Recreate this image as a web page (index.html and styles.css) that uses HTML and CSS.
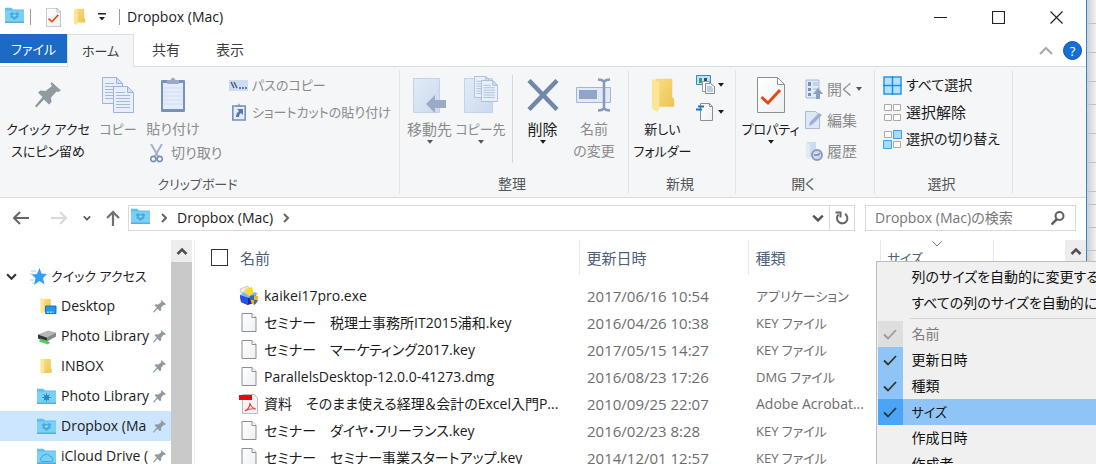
FILE: index.html
```html
<!DOCTYPE html>
<html lang="ja">
<head>
<meta charset="utf-8">
<title>Dropbox (Mac)</title>
<link rel="stylesheet" href="styles.css">
</head>
<body>
<svg class="defs" aria-hidden="true">
  <defs>
    <linearGradient id="gPaper" x1="0" y1="0" x2="1" y2="1"><stop offset="0" stop-color="#fff"/><stop offset="1" stop-color="#edf0f2"/></linearGradient>
    <linearGradient id="gFolder" x1="0" y1="0" x2="1" y2="1"><stop offset="0" stop-color="#f8dc86"/><stop offset="1" stop-color="#eec44f"/></linearGradient>
    <linearGradient id="gFade" x1="0" y1="0" x2="1" y2="1"><stop offset="0" stop-color="#e3ebf7"/><stop offset="1" stop-color="#cbd9ee"/></linearGradient>
  </defs>
  <symbol id="bluefolder" viewBox="0 0 20 16"><path d="M0 0h6l2 2h11v13H0z" fill="#5fc0ec"/><path d="M0 3h19v12H0z" fill="#7ad0f8"/><path d="M0 14h19v1.500H0z" fill="#58aed8"/></symbol>
  <symbol id="dropfolder" viewBox="0 0 20 16"><use href="#bluefolder"/><path d="M7 4.500l2.500 1.500 2.500-1.500 2.500 1.800-1.500 1.700 1 1.500-2 1-2.500 2-2.500-2-2-1 1-1.500-1.500-1.700z" fill="#49aadd"/><path d="M9.500 6.500l2.200 1.500-2.200 1.600-2.200-1.600z" fill="#8ad7fa"/></symbol>
  <symbol id="yfolder" viewBox="0 0 14 18"><path d="M3 0h9v10l1 1v4H3z" fill="url(#gFolder)"/><path d="M1 0l4 2v14l-1 2-3-2z" fill="#fde596"/></symbol>
  <symbol id="pin" viewBox="0 0 26 26"><path d="M16.500 0L26 8.500l-3 1.500-1.500-.5-5.500 6 .5 4.500-2.500 2.500-5-5L1.500 25.500 0 24l7.500-9L3 10.500 5.500 8.500l5 .5L17 4l-1.500-2z" fill="#8f9aa1"/></symbol>
  <symbol id="check" viewBox="0 0 14 11"><path d="M1 5.500l4 4L13 1" fill="none" stroke="currentColor" stroke-width="1.800"/></symbol>
  <symbol id="page" viewBox="0 0 15 19"><path d="M.5.5h10l4 4v14H.5z" fill="url(#gPaper)" stroke="#8c8f92"/><path d="M10.500.5v4h4" fill="#fff" stroke="#8c8f92"/></symbol>
  <symbol id="proppage" viewBox="0 0 28 36"><path d="M.5.5h20l7 7v28H.5z" fill="url(#gPaper)" stroke="#8c8f92"/><path d="M20.500.5v7h7z" fill="#fff" stroke="#8c8f92"/><path d="M4.500 20l6.500 6L23 13" fill="none" stroke="#e8470e" stroke-width="3"/></symbol>
  <symbol id="down" viewBox="0 0 6 4"><path d="M0 0h6L3 3.800z" fill="currentColor"/></symbol>
  <symbol id="chev" viewBox="0 0 10 6"><path d="M1 1l4 4 4-4" fill="none" stroke="currentColor" stroke-width="2"/></symbol>
  <symbol id="chevr" viewBox="0 0 6 10"><path d="M1 1l4 4-4 4" fill="none" stroke="currentColor" stroke-width="2"/></symbol>
  <symbol id="textpage" viewBox="0 0 21 27"><path d="M.5.5h14l6 6v20H.5z" fill="#e8effa" stroke="#9fb3d6"/><path d="M14.500.5v6h6z" fill="#d3dff2" stroke="#9fb3d6"/><path d="M3 6.500h9M3 9.500h14M3 12.500h14M3 15.500h14M3 18.500h14M3 21.500h14" stroke="#a4b8da"/></symbol>
  <symbol id="clip" viewBox="0 0 26 36"><rect x="1" y="3" width="24" height="32" rx="1" fill="#7890bd"/><path d="M3 6h20v26H3z" fill="#e4ecf9"/><path d="M3 11h20M3 15h20M3 19h20M3 23h20M3 27h20" stroke="#cfdbf0"/><path d="M7 7V3h3.500q2.500-5 5 0H19v4z" fill="#9aabc6"/></symbol>
</svg>

<div class="window">
  <header class="titlebar">
    <svg class="i20"><use href="#dropfolder"/></svg>
    <span class="tick"></span>
    <button class="quick" aria-label="プロパティ"><svg class="qprop"><use href="#proppage"/></svg></button>
    <button class="quick" aria-label="新しいフォルダー"><svg class="qfold"><use href="#yfolder"/></svg></button>
    <button class="quick narrow" aria-label="カスタマイズ"><svg width="8" height="8" viewBox="0 0 8 8"><path d="M0 0h8v1.500H0zM1 4h6L4 7.500z" fill="#222"/></svg></button>
    <span class="tick"></span>
    <h1 class="title">Dropbox (Mac)</h1>
    <div class="controls">
      <button aria-label="最小化"><svg width="13" height="13"><path d="M0 6.500h13" stroke="#222"/></svg></button>
      <button aria-label="最大化"><svg width="13" height="13"><path d="M.5.5h12v12H.5z" fill="none" stroke="#222" stroke-width="1.200"/></svg></button>
      <button aria-label="閉じる"><svg width="13" height="13"><path d="M.5.5l12 12m0-12l-12 12" stroke="#222" stroke-width="1.200"/></svg></button>
    </div>
  </header>

  <nav class="tabs">
    <button class="tab file">ファイル</button>
    <button class="tab active">ホーム</button>
    <button class="tab">共有</button>
    <button class="tab">表示</button>
    <span class="grow"></span>
    <button class="collapse" aria-label="リボンの最小化"><svg width="14" height="9" viewBox="0 0 14 9"><path d="M1 8l6-6 6 6" fill="none" stroke="#a8a8a8" stroke-width="2"/></svg></button>
    <button class="help" aria-label="ヘルプ">?</button>
  </nav>

  <div class="ribbon">
    <section class="group">
      <div class="tools">
        <button class="big pinbtn"><span class="ico"><svg width="26" height="26"><use href="#pin"/></svg></span>クイック アクセ<br>スにピン留め</button>
        <button class="big copybtn off"><span class="ico"><svg width="32" height="36"><use href="#textpage" width="21" height="27"/><use href="#textpage" x="11" y="9" width="21" height="27"/></svg></span>コピー</button>
        <div class="stack paste">
          <button class="big off"><span class="ico"><svg width="26" height="36"><use href="#clip"/></svg></span><span>貼り付け</span></button>
          <button class="small off cut"><svg width="13" height="19" viewBox="0 0 13 19"><path d="M1 0l7 12M12 0L5 12" stroke="#a3b1cb" stroke-width="2"/><circle cx="3.300" cy="15" r="2.600" fill="none" stroke="#7890b5" stroke-width="1.600"/><circle cx="9.700" cy="15" r="2.600" fill="none" stroke="#7890b5" stroke-width="1.600"/></svg>切り取り</button>
        </div>
        <div class="stack paths">
          <button class="small off"><svg width="19" height="11"><path d="M0 0h19v11H0z" fill="#cfdcf0"/><path d="M2 2l3 6m0-6l3 6" stroke="#4e6288" stroke-width="1.500"/><path d="M10 8h2m1 0h2m1 0h2" stroke="#4e6288" stroke-width="1.500"/></svg>パスのコピー</button>
          <button class="small off"><svg width="19" height="18"><g transform="translate(3 0)"><path d="M.8 3h12.400v14H.8z" fill="#e4ecf9" stroke="#7890bd" stroke-width="1.600"/><path d="M4 4V2h2q1-3 2 0h2v2z" fill="#8798ba"/><path d="M5 6h6v6L9 10q-2 1-2 4H4q0-4 3-6z" fill="#5a77aa"/></g></svg>ショートカットの貼り付け</button>
        </div>
      </div>
      <h2>クリップボード</h2>
    </section>

    <section class="group">
      <div class="tools organize">
        <button class="big off"><span class="ico"><svg width="34" height="38"><path d="M.5 2.500h26v34H.5z" fill="url(#gFade)" stroke="#c4d3ea"/><path d="M13 28l9-9v5h11v8H22v5z" fill="#9caac7"/></svg></span><span class="kanji">移動先</span><svg class="drop"><use href="#down"/></svg></button>
        <button class="big off"><span class="ico"><svg width="34" height="38"><path d="M.5 2.500h28v34H.5z" fill="url(#gFade)" stroke="#c4d3ea"/><use href="#textpage" x="10" y="0" width="17" height="22"/><use href="#textpage" x="17" y="4" width="17" height="22"/></svg></span>コピー先<svg class="drop"><use href="#down"/></svg></button>
        <span class="rule"></span>
        <button class="big"><span class="ico"><svg width="32" height="32"><path d="M2 1.500l28 29M30 1.500L2 30.500" stroke="#7187ab" stroke-width="4.500"/></svg></span><span class="kanji">削除</span><svg class="drop"><use href="#down"/></svg></button>
        <button class="big off"><span class="ico"><svg width="36" height="34"><path d="M.5 9.500h34v15H.5z" fill="#e1eaf8" stroke="#a3b5d4"/><path d="M3 12h18v9H3z" fill="#93a5c6"/><path d="M22 1.500q4 0 6 2 2-2 6-2M22 32.500q4 0 6-2 2 2 6 2M28 3v28" fill="none" stroke="#8799bb" stroke-width="2.500"/></svg></span><span class="rename">名前<br>の変更</span></button>
      </div>
      <h2>整理</h2>
    </section>

    <section class="group">
      <div class="tools create">
        <button class="big"><span class="ico"><svg width="26" height="35"><use href="#yfolder" width="26" height="35"/></svg></span>新しい<br>フォルダー</button>
        <div class="stack minis">
          <button class="mini" aria-label="新しいアイテム"><svg width="19" height="19"><path d="M.5.5h14v9H.5z" fill="#bde3fb" stroke="#3f87b8"/><path d="M3 3h3v5H3z" fill="#37a06c"/><path d="M8 3h3v3H8z" fill="#344f80"/><path d="M6.500 6.500h7v10h-7z" fill="#fff" stroke="#999"/><path d="M9.500 8.500h5l4 3v7h-9z" fill="#f2f6fa" stroke="#888"/><path d="M11 12h5M11 14h6M11 16h6" stroke="#7fa9d3"/></svg><svg class="drop"><use href="#down"/></svg></button>
          <button class="mini" aria-label="ショートカット"><svg width="19" height="19"><path d="M4.500 1.500h9l3 3v14h-12z" fill="url(#gPaper)" stroke="#8c8f92"/><path d="M13.500 1.500v3h3" fill="none" stroke="#8c8f92"/><path d="M2 4.500h6M0 7.500h6" stroke="#1874c7" stroke-width="2"/></svg><svg class="drop"><use href="#down"/></svg></button>
        </div>
      </div>
      <h2>新規</h2>
    </section>

    <section class="group">
      <div class="tools open">
        <button class="big"><span class="ico"><svg width="28" height="36"><use href="#proppage"/></svg></span>プロパティ<svg class="drop"><use href="#down"/></svg></button>
        <div class="stack verbs">
          <button class="small off"><svg width="18" height="20"><path d="M1 1h13v18H1z" fill="#dfe9f8" stroke="#a9bbd9"/><path d="M3 3h3v4H3zM3 9h3v3H3zM3 14h3v3H3z" fill="#788eb4"/><path d="M8 4h5M8 6h5M8 10h5" stroke="#a9bbd9"/><path d="M8 15l5-6 5 6h-3v5h-4v-5z" fill="#8c9fc2"/></svg>開く<svg class="drop"><use href="#down"/></svg></button>
          <button class="small off"><svg width="18" height="20"><path d="M.5 1.500h10l4 4v13H.5z" fill="#dde7f6" stroke="#a9bbd9"/><path d="M4 16l1-4 9-9 3 2-9 9z" fill="#9eb0cf"/></svg>編集</button>
          <button class="small off"><svg width="18" height="20"><path d="M1 1h10v15H1z" fill="#cfdcf0"/><path d="M1 1l4 2v16l-4-2z" fill="#e1eaf7"/><circle cx="12" cy="14" r="5" fill="#cfdbed" stroke="#8b9dbe" stroke-width="2"/><path d="M9 14h4l2-2" stroke="#7489ae" fill="none" stroke-width="1.500"/></svg>履歴</button>
        </div>
      </div>
      <h2>開く</h2>
    </section>

    <section class="group">
      <div class="tools select">
        <div class="stack picks">
          <button class="small"><svg width="19" height="19"><path d="M1 1h17v17H1z" fill="#b5dffb" stroke="#2997e4" stroke-width="1.500"/><path d="M9.500 0v19M0 9.500h19" stroke="#1d8fe1" stroke-width="1.500"/></svg>すべて選択</button>
          <button class="small"><svg width="19" height="19"><path d="M1.500 1.500h7v6h-7zM10.500 1.500h7v6h-7zM1.500 11.500h7v6h-7zM10.500 11.500h7v6h-7z" fill="#fafafa" stroke="#a9a9a9"/></svg><span class="kanji">選択解除</span></button>
          <button class="small"><svg width="19" height="19"><path d="M1.500 1.500h7v6h-7zM10.500 11.500h7v6h-7z" fill="#fafafa" stroke="#a9a9a9"/><path d="M10.500.5h8v8h-8zM.5 10.500h8v8h-8z" fill="#a9dafb" stroke="#3f9fe2"/></svg>選択の切り替え</button>
        </div>
      </div>
      <h2>選択</h2>
    </section>
  </div>

  <div class="address">
    <button class="nav back" aria-label="戻る"><svg width="17" height="14" viewBox="0 0 17 14"><path d="M17 7H2M8 1L2 7l6 6" fill="none" stroke="#666" stroke-width="2"/></svg></button>
    <button class="nav fwd" aria-label="進む"><svg width="17" height="14" viewBox="0 0 17 14"><path d="M0 7h15M9 1l6 6-6 6" fill="none" stroke="#d8d8d8" stroke-width="2"/></svg></button>
    <button class="nav hist" aria-label="最近表示した場所"><svg width="8" height="6"><use href="#chev"/></svg></button>
    <button class="nav up" aria-label="上へ"><svg width="16" height="16" viewBox="0 0 16 16"><path d="M8 16V2M2 8l6-6 6 6" fill="none" stroke="#707070" stroke-width="2.200"/></svg></button>
    <div class="crumbs">
      <svg class="i20"><use href="#dropfolder"/></svg>
      <svg class="sepr"><use href="#chevr"/></svg>
      <a href="#">Dropbox (Mac)</a>
      <svg class="sepr"><use href="#chevr"/></svg>
      <span class="grow"></span>
      <button aria-label="以前の場所"><svg width="12" height="8"><use href="#chev"/></svg></button>
      <button class="reload" aria-label="更新"><svg width="14" height="14" viewBox="0 0 14 14"><path d="M10 2.800A5.200 5.200 0 1 1 3.500 3.500" fill="none" stroke="#666" stroke-width="2"/><path d="M.5 1.500h5v5" fill="none" stroke="#666" stroke-width="2"/></svg></button>
    </div>
    <div class="search">
      <input type="text" aria-label="検索" placeholder="Dropbox (Mac)の検索">
      <button aria-label="検索する"><svg width="14" height="14" viewBox="0 0 14 14"><circle cx="8.500" cy="5" r="4" fill="none" stroke="#606060" stroke-width="2"/><path d="M6 8l-5.500 5.500" stroke="#606060" stroke-width="2.500"/></svg></button>
    </div>
  </div>

  <div class="main">
    <aside class="side">
      <div class="tree">
        <a href="#" class="root"><svg class="fold"><use href="#chev"/></svg><svg width="17" height="17" viewBox="0 0 17 17"><path d="M9.500 0l2 5.500 5.500.5-4 4 1.500 6.500-5-3.500-5.500 4 1.500-7-4-3.500 5.500-.5z" fill="#31a0f3"/><path d="M1 3h5M0 6h3M0 12h4M2 15h3" stroke="#8ed0fb"/></svg><span class="kana">クイック アクセス</span></a>
        <a href="#"><svg class="i20" viewBox="0 0 20 18"><path d="M6 1h8v14H6z" fill="url(#gFolder)"/><path d="M3 0l4 2v12l-1 3-3-2z" fill="#fde596"/><path d="M8.500 8.500h11v8h-11z" fill="#1e97ec" stroke="#0f6fb8"/><path d="M10 15h7" stroke="#fff" stroke-dasharray="2 1"/></svg><span>Desktop</span><svg class="pin"><use href="#pin"/></svg></a>
        <a href="#"><svg class="i20" viewBox="0 0 20 16"><path d="M1 6l10-4 8 2-8 5z" fill="#b5b7b8"/><path d="M1 6l9 3v4l-9-3z" fill="#303433"/><path d="M10 9l9-5v4l-9 5z" fill="#858988"/><path d="M3 10l7 2 3 2-2 2-9-3z" fill="#52cd60"/></svg><span>Photo Library</span><svg class="pin"><use href="#pin"/></svg></a>
        <a href="#"><svg class="i20" viewBox="0 0 20 18"><path d="M6 1h8v10l1 1v4H6z" fill="url(#gFolder)"/><path d="M3 0l4 2v12l-1 3-3-2z" fill="#fde596"/></svg><span>INBOX</span><svg class="pin"><use href="#pin"/></svg></a>
        <a href="#"><svg class="i20" viewBox="0 0 20 16"><use href="#bluefolder"/><circle cx="9.500" cy="9" r="2.500" fill="#2c86bb"/><path d="M9.500 5v8M5.500 9h8M6.500 6l6 6M12.500 6l-6 6" stroke="#2c86bb"/></svg><span>Photo Library</span><svg class="pin"><use href="#pin"/></svg></a>
        <a href="#" class="current"><svg class="i20"><use href="#dropfolder"/></svg><span>Dropbox (Ma</span><svg class="pin"><use href="#pin"/></svg></a>
        <a href="#"><svg class="i20" viewBox="0 0 20 16"><use href="#bluefolder"/><path d="M5 13a2.500 2.500 0 0 1 0-4.500 2 2 0 0 1 2-1.500 3.500 3.500 0 0 1 6 1q3 0 3 2.500T13.500 13z" fill="none" stroke="#42a5d8"/></svg><span>iCloud Drive (</span><svg class="pin"><use href="#pin"/></svg></a>
      </div>
      <div class="scroll"><button aria-label="上へスクロール"><svg width="12" height="8" viewBox="0 0 12 8"><path d="M1.500 7L6 2.500 10.500 7" fill="none" stroke="#505050" stroke-width="2.500"/></svg></button></div>
    </aside>

    <div class="files">
      <table>
        <colgroup><col class="c-check"><col class="c-name"><col class="c-date"><col class="c-type"><col class="c-size"><col></colgroup>
        <thead>
          <tr>
            <th class="all"><input type="checkbox" aria-label="すべて選択"></th>
            <th class="name">名前</th>
            <th>更新日時</th>
            <th>種類</th>
            <th class="size">サイズ
              <svg class="sort" viewBox="0 0 10 6"><path d="M.5.5L5 5 9.500.5" fill="none" stroke="#7a7a7a"/></svg>
              <div class="menu" role="menu">
                <button role="menuitem">列のサイズを自動的に変更する</button>
                <button role="menuitem">すべての列のサイズを自動的に変更する</button>
                <hr>
                <button role="menuitemcheckbox" aria-checked="true" disabled><span class="mark"><svg><use href="#check"/></svg></span>名前</button>
                <button role="menuitemcheckbox" aria-checked="true"><span class="mark"><svg><use href="#check"/></svg></span>更新日時</button>
                <button role="menuitemcheckbox" aria-checked="true"><span class="mark"><svg><use href="#check"/></svg></span>種類</button>
                <button role="menuitemcheckbox" aria-checked="true" class="hot"><span class="mark"><svg><use href="#check"/></svg></span><span class="kana">サイズ</span></button>
                <button role="menuitemcheckbox" aria-checked="false">作成日時</button>
                <button role="menuitemcheckbox" aria-checked="false">作成者</button>
              </div>
            </th>
            <th class="last"></th>
          </tr>
        </thead>
        <tbody>
          <tr><td></td><td><div class="entry"><svg width="20" height="20"><path d="M1 3l8-3 1 4-8 3z" fill="#f2f2e8" stroke="#aaa" stroke-width=".6"/><path d="M6 3l7-2 2 7-8 3z" fill="#f8dc29"/><path d="M1 9l8 2 8-3v8l-8 3-7-3z" fill="#1726a6"/><path d="M1 9l8 2v8l-7-3z" fill="#2852dc"/><path d="M1 9l4-3 5 4 6-4 3 2-9 4z" fill="#7fb7f3"/><path d="M11 10l4-1 4 1q0 7-4 9-4-2-4-9z" fill="#f3b51c"/><path d="M15 9v5h-4q-.5-2 0-4zM15 14h4q-1 3-4 5z" fill="#3168b8"/></svg>kaikei17pro.exe</div></td><td class="date">2017/06/16 10:54</td><td class="kana">アプリケーション</td><td></td><td></td></tr>
          <tr><td></td><td><div class="entry"><svg class="doc"><use href="#page"/></svg>セミナー　税理士事務所IT2015浦和.key</div></td><td class="date">2016/04/26 10:38</td><td class="kana">KEY ファイル</td><td></td><td></td></tr>
          <tr><td></td><td><div class="entry"><svg class="doc"><use href="#page"/></svg>セミナー　マーケティング2017.key</div></td><td class="date">2017/05/15 14:27</td><td class="kana">KEY ファイル</td><td></td><td></td></tr>
          <tr><td></td><td><div class="entry"><svg class="doc"><use href="#page"/></svg>ParallelsDesktop-12.0.0-41273.dmg</div></td><td class="date">2016/08/23 17:26</td><td class="kana">DMG ファイル</td><td></td><td></td></tr>
          <tr><td></td><td><div class="entry"><svg width="20" height="20"><path d="M3.500.5h12l3 4v15h-15z" fill="#f4f4f4" stroke="#bbb"/><path d="M0 1h13v5H0z" fill="#e30b0b"/><path d="M6 17q5-3 5-8 1 5 6 6-6-1-11 2z" fill="none" stroke="#e64343" stroke-width="1.200"/></svg>資料　そのまま使える経理＆会計のExcel入門P...</div></td><td class="date">2010/09/25 22:07</td><td>Adobe Acrobat...</td><td></td><td></td></tr>
          <tr><td></td><td><div class="entry"><svg class="doc"><use href="#page"/></svg>セミナー　ダイヤ・フリーランス.key</div></td><td class="date">2016/02/23 8:28</td><td class="kana">KEY ファイル</td><td></td><td></td></tr>
          <tr><td></td><td><div class="entry"><svg class="doc"><use href="#page"/></svg>セミナー　セミナー事業スタートアップ.key</div></td><td class="date">2014/12/01 12:57</td><td class="kana">KEY ファイル</td><td></td><td></td></tr>
        </tbody>
      </table>
    </div>
    <div class="scroll"><button aria-label="上へスクロール"><svg width="12" height="8" viewBox="0 0 12 8"><path d="M1.500 7L6 2.500 10.500 7" fill="none" stroke="#505050" stroke-width="2.500"/></svg></button></div>
  </div>
</div>
<div class="behind" aria-hidden="true"><i></i><i></i><i></i><i></i><i></i><i></i><i></i><i></i><i></i><i></i></div>
</body>
</html>
```
FILE: styles.css
```css
* { box-sizing: border-box; }
body {
  margin: 0;
  height: 100vh;
  overflow: hidden;
  display: flex;
  background: #fff;
  color: #1b1b1b;
  font: 14px/22px "Open Sans", "Noto Sans CJK JP", sans-serif;
  font-feature-settings: "palt";
}
button, input {
  margin: 0;
  padding: 0;
  border: 0;
  background: none;
  color: inherit;
  font: inherit;
  font-feature-settings: inherit;
}
a { color: inherit; text-decoration: none; }
h1, h2 { margin: 0; font-weight: 400; }
svg { display: block; flex: none; }
.defs { position: absolute; width: 0; height: 0; }
.grow { flex: 1; }
.i20 { width: 20px; height: 17px; }
.kana { font-size: 13px; }
.kanji { font-size: 15px; }

.window {
  flex: 1;
  min-width: 0;
  display: flex;
  flex-direction: column;
  border-right: 1px solid #2f86d2;
}
.behind {
  flex: 0 0 9px;
  background: linear-gradient(90deg, #cfcfcf, #f1f1f1);
}
.behind i { display: block; height: 29px; border-bottom: 1px solid #c2c2c2; }
.behind i:nth-child(1) { height: 24px; }
.behind i:nth-child(4), .behind i:nth-child(9), .behind i:nth-child(10) { height: 23px; }
.behind i:nth-child(8) { height: 13px; }

/* Title bar */
.titlebar { display: flex; align-items: center; height: 34px; padding-left: 5px; }
.titlebar .i20, .crumbs .i20 { margin-bottom: 3px; }
.tick { width: 1px; height: 16px; margin-left: 5px; background: #9a9a9a; }
.quick { display: flex; justify-content: center; width: 26px; margin-left: 9px; }
.quick + .quick { margin-left: 0; }
.quick.narrow { width: 20px; }
.qprop { width: 15px; height: 19px; }
.qfold { width: 13px; height: 18px; }
.quick.narrow + .tick { margin-left: 7px; }
.title { flex: 1; margin-left: 7px; font-size: 14px; }
.controls { display: flex; padding-right: 1px; }
.controls button { display: flex; justify-content: center; width: 58px; }

/* Ribbon tabs */
.tabs { display: flex; align-items: flex-start; height: 32px; padding-right: 4px; }
.tab { height: 32px; width: 64px; color: #3c3c3c; font-size: 14px; }
.tab.file { width: 67px; height: 29px; background: #1b6ac6; color: #fff; font-size: 13px; }
.tab.active {
  position: relative;
  z-index: 1;
  width: 67px;
  height: 33px;
  border: 1px solid #dcdfe1;
  border-bottom: 0;
  background: #f4f6f8;
  font-size: 13px;
}
.collapse { margin: 12px 10px 0 0; }
.help {
  width: 19px;
  height: 19px;
  margin-top: 7px;
  border: 1px solid #0b54a6;
  border-radius: 50%;
  background: #146fd7;
  color: #fff;
  font-size: 13px;
  line-height: 16px;
}

/* Ribbon */
.ribbon {
  display: grid;
  grid-template-columns: 400px 229px 107px 139px 138px;
  height: 132px;
  border: solid #dadcde;
  border-width: 1px 0;
  background: #f4f6f8;
}
.group {
  display: flex;
  flex-direction: column;
  margin: 3px 0;
  border-right: 1px solid #e1e3e5;
}
.group h2 { padding-right: 4px; color: #555; font-size: 14px; line-height: 20px; text-align: center; }
.group:first-child h2 { font-size: 13px; }
.tools { flex: 1; display: flex; align-items: flex-start; white-space: nowrap; }
.stack { display: flex; flex-direction: column; align-items: flex-start; }
.big { display: flex; flex-direction: column; align-items: center; font-size: 13px; padding-top: 5px; }
.big .ico { display: flex; align-items: center; justify-content: center; height: 40px; margin-bottom: 3px; }
.small { display: flex; align-items: center; gap: 5px; font-size: 14px; }
.off { color: #8b8b8b; }
.drop { width: 6px; height: 4px; }
.off .drop { color: #555; }
.pinbtn { width: 96px; }
.copybtn { width: 44px; }
.paste { width: 89px; align-items: flex-start; }
.paste .big { width: 66px; height: 72px; font-size: 14px; }
.cut { gap: 8px; margin-left: 10px; }
.paths { gap: 5px; padding-top: 4px; }
.paths .small { font-size: 13px; gap: 4px; }
.organize { padding-left: 4px; }
.organize .big { width: 51px; }
.organize .big:last-child { width: 52px; }
.rename { font-size: 14px; }
.rule { width: 1px; height: 88px; margin: 5px 4px 0 6px; background: #d5d7d9; }
.create .big { width: 67px; }
.minis { padding-top: 5px; gap: 8px; }
.mini { display: flex; align-items: center; gap: 3px; }
.open .big { width: 69px; }
.verbs { gap: 9px; padding-top: 8px; }
.verbs .small { gap: 4px; font-size: 15px; }
.select { padding: 4px 0 0 8px; }
.picks { gap: 5px; }
.picks .small { gap: 4px; }

/* Address bar */
.address { display: flex; align-items: center; padding: 7px 10px 5px 12px; color: #1b1b1b; }
.nav { color: #555; }
.fwd { margin-left: 22px; }
.hist { margin-left: 15px; }
.up { margin: 0 7px 0 14px; }
.crumbs, .search { display: flex; align-items: center; height: 26px; border: 1px solid #d9d9d9; }
.crumbs { flex: 1; padding-left: 2px; }
.sepr { width: 6px; height: 10px; margin: 0 10px; color: #666; }
.crumbs button { color: #555; }
.crumbs .reload { display: flex; justify-content: center; width: 25px; height: 24px; margin-left: 5px; align-items: center; border-left: 1px solid #d9d9d9; }
.search { width: 211px; margin-left: 10px; padding: 0 10px 0 9px; }
.search input { flex: 1; min-width: 0; outline: 0; }
.search input::placeholder { color: #767676; opacity: 1; }

/* Navigation pane */
.main { flex: 1; display: flex; min-height: 0; padding-top: 4px; }
.side { display: flex; width: 195px; padding-right: 2px; border-right: 1px solid #f0f0f0; }
.tree { flex: 1; min-width: 0; padding-top: 21px; }
.tree a { display: flex; align-items: center; gap: 4px; height: 30px; padding: 0 5px 0 37px; white-space: nowrap; }
.tree a span { flex: 1; }
.tree .root { padding-left: 6px; }
.tree .fold { width: 11px; height: 7px; margin-right: 9px; color: #333; }
.tree .current { background: #cce6ff; }
.tree .pin { width: 13px; height: 13px; }
.scroll { flex: 0 0 21px; background: #c9c9c9; }
.scroll button { display: flex; align-items: center; justify-content: center; width: 21px; height: 22px; background: #ededed; }

/* File list */
.files { flex: 1; min-width: 0; }
table { width: 100%; table-layout: fixed; border-collapse: collapse; }
.c-check { width: 38px; }
.c-name { width: 346px; }
.c-date { width: 169px; }
.c-type { width: 132px; }
.c-size { width: 113px; }
th {
  height: 35px;
  padding: 0 7px;
  border-right: 1px solid #e8e8e8;
  color: #4c607a;
  font-size: 15px;
  font-weight: 400;
  text-align: left;
}
th.all { padding: 0 0 0 16px; border: 0; }
th.last { border: 0; }
th.size { position: relative; font-size: 13px; }
input[type="checkbox"] { display: block; width: 17px; height: 17px; appearance: none; border: 1px solid #333; }
.sort { position: absolute; top: 1px; left: 51px; width: 10px; height: 6px; }
tbody::before { content: ""; display: block; height: 7px; }
td { height: 27px; padding: 0 8px; color: #6d6d6d; white-space: nowrap; }
.date { font-size: 15px; }
td .entry { display: flex; align-items: center; gap: 5px; margin-left: -2px; color: #1b1b1b; }
.doc { width: 20px; height: 19px; }

/* Column menu */
.menu {
  position: absolute;
  z-index: 2;
  top: 21px;
  left: -5px;
  width: 290px;
  padding: 2px 2px 2px 1px;
  border: 1px solid #bdbdbd;
  background: #f0f0f0;
  color: #111;
  font-size: 14px;
}
.menu button { display: flex; align-items: center; width: 100%; height: 26px; padding-left: 34px; text-align: left; white-space: nowrap; }
.menu button:has(.mark) { padding-left: 0; gap: 9px; }
.menu hr { height: 1px; margin: 2px 0 2px 32px; border: 0; background: #d2d2d2; }
.mark { display: flex; align-items: center; justify-content: center; width: 25px; height: 26px; background: #8fc5f6; color: #333; }
.mark svg { width: 14px; height: 11px; }
.menu button:disabled { color: #7b7b7b; }
.menu button:disabled .mark { background: #dedede; color: #9a9a9a; }
.menu .hot { background: #8fc5f6; }
.menu .hot .mark { background: #4ba5f7; }
```
